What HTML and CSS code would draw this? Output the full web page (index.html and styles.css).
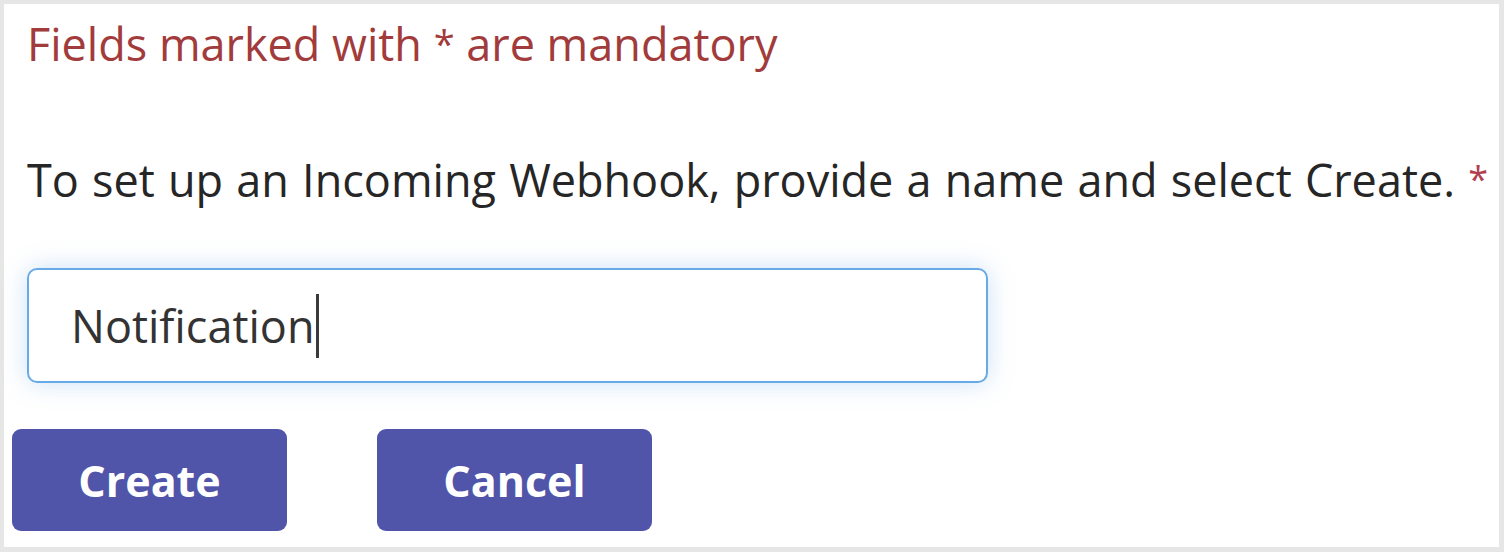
FILE: index.html
```html
<!DOCTYPE html>
<html lang="en">
<head>
<meta charset="utf-8">
<title>Incoming Webhook</title>
<link rel="stylesheet" href="styles.css">
</head>
<body>
<div class="panel">
  <p class="note">Fields marked with <span class="star">*</span> are mandatory</p>
  <label class="prompt" for="name">To set up an Incoming Webhook, provide a name and select Create. <span class="req">*</span></label>
  <div class="field">
    <div class="input" id="name"><span class="value">Notification</span><span class="caret"></span></div>
  </div>
  <div class="actions">
    <button class="btn">Create</button>
    <button class="btn">Cancel</button>
  </div>
</div>
</body>
</html>
```
FILE: styles.css
```css
html, body {
  margin: 0;
  padding: 0;
  background: #e6e6e6;
  height: 552px;
  overflow: hidden;
}
body {
  padding: 4px 5px 5px 4px;
  box-sizing: border-box;
  font-family: "Open Sans", "Noto Sans", sans-serif;
}
.panel {
  background: #ffffff;
  height: 543px;
  box-sizing: border-box;
  padding: 0 0 0 23px;
  display: flex;
  flex-direction: column;
}
.note {
  margin: 0;
  padding-top: 10px;
  font-size: 45px;
  line-height: 60px;
  height: 60px;
  color: #a23b3b;
}
.star {
  font-size: 38px;
  line-height: 1;
  vertical-align: 3px;
}
.prompt {
  display: block;
  margin-top: 76px;
  font-size: 45px;
  line-height: 60px;
  height: 60px;
  word-spacing: 1.5px;
  color: #262626;
}
.req {
  color: #b04050;
  font-size: 36px;
  line-height: 1;
  vertical-align: 5px;
}
.field {
  margin-top: 58px;
}
.input {
  width: 961px;
  height: 115px;
  box-sizing: border-box;
  border: 2px solid #68aae6;
  border-radius: 10px;
  box-shadow: 0 0 24px rgba(110, 170, 230, 0.35);
  display: flex;
  align-items: center;
  padding-left: 42px;
  font-size: 45px;
  color: #333333;
}
.caret {
  display: inline-block;
  width: 3px;
  height: 64px;
  background: #3a3a3a;
  margin-left: 2px;
}
.actions {
  display: flex;
  gap: 90px;
  margin-top: 46px;
  margin-left: -15px;
}
.btn {
  width: 275px;
  height: 102px;
  border: none;
  border-radius: 9px;
  background: #5155a9;
  color: #ffffff;
  font-family: "Open Sans", "Noto Sans", sans-serif;
  font-weight: 700;
  font-size: 43px;
  padding: 0;
}
```
